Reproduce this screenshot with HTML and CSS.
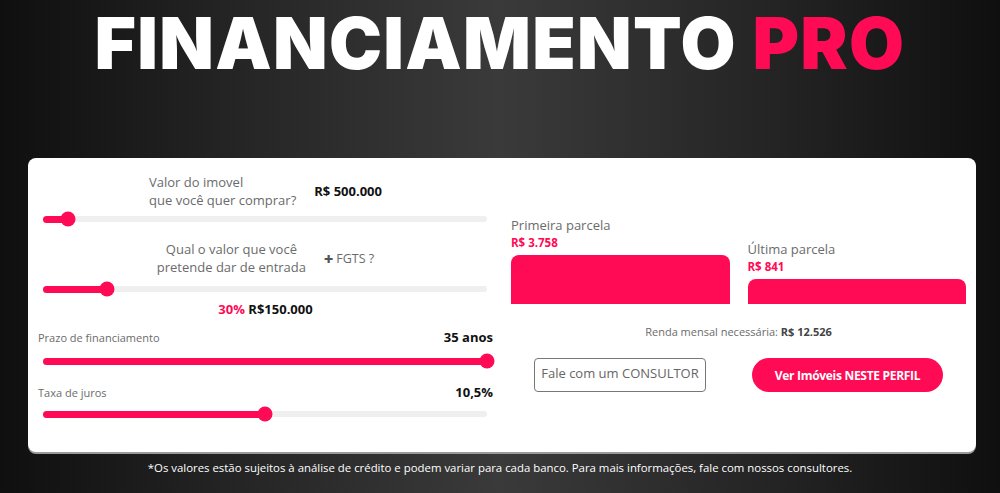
FILE: index.html
```html
<!DOCTYPE html>
<html lang="pt-BR">
<head>
<meta charset="utf-8">
<title>Financiamento PRO</title>
<link rel="stylesheet" href="styles.css">
</head>
<body>
<h1 class="title">FINANCIAMENTO <span class="pink">PRO</span></h1>
<main class="card">
  <section class="left">
    <div class="qrow">
      <div class="qtext left-align">Valor do imovel<br>que você quer comprar?</div>
      <div class="qvalue">R$ 500.000</div>
    </div>
    <div class="slider s1"><div class="fill" style="width:5.6%"></div><div class="thumb" style="left:5.6%"></div></div>

    <div class="qrow q2">
      <div class="qtext">Qual o valor que você<br>pretende dar de entrada</div>
      <div class="fgts"><span class="plus">✚</span> FGTS ?</div>
    </div>
    <div class="slider s2"><div class="fill" style="width:14.4%"></div><div class="thumb" style="left:14.4%"></div></div>

    <div class="entrada"><span class="pink">30%</span> R$150.000</div>

    <div class="lrow"><span class="lbl">Prazo de financiamento</span><span class="val">35 anos</span></div>
    <div class="slider s3"><div class="fill" style="width:100%"></div><div class="thumb" style="left:100%"></div></div>

    <div class="lrow l2"><span class="lbl">Taxa de juros</span><span class="val">10,5%</span></div>
    <div class="slider s4"><div class="fill" style="width:50%"></div><div class="thumb" style="left:50%"></div></div>
  </section>

  <section class="right">
    <div class="bars">
      <div class="barcol">
        <div class="blabel">Primeira parcela</div>
        <div class="bvalue">R$ 3.758</div>
        <div class="bar big"></div>
      </div>
      <div class="barcol">
        <div class="blabel">Última parcela</div>
        <div class="bvalue">R$ 841</div>
        <div class="bar small"></div>
      </div>
    </div>
    <div class="renda">Renda mensal necessária: <b>R$ 12.526</b></div>
    <div class="buttons">
      <a class="btn outline">Fale com um CONSULTOR</a>
      <a class="btn solid">Ver Imóveis NESTE PERFIL</a>
    </div>
  </section>
</main>
<p class="note">*Os valores estão sujeitos à análise de crédito e podem variar para cada banco. Para mais informações, fale com nossos consultores.</p>
</body>
</html>
```

FILE: styles.css
```css
* { box-sizing: border-box; }
html, body { margin: 0; padding: 0; }
body {
  width: 1000px;
  height: 493px;
  overflow: hidden;
  font-family: "Open Sans", "Liberation Sans", sans-serif;
  background: linear-gradient(to right, #0f0f0f 0%, #262626 25%, #3a3a3a 50%, #262626 75%, #0f0f0f 100%);
}
.pink { color: #ff0a54; }

.title {
  margin: 0;
  height: 158px;
  padding-top: 0;
  text-align: center;
  font-family: "Inter", "Liberation Sans", sans-serif;
  font-weight: 900;
  font-size: 71px;
  line-height: 86px;
  letter-spacing: 1.3px;
  color: #fff;
}

.card {
  margin: 0 24px 0 28px;
  height: 294px;
  background: #fff;
  border-radius: 8px;
  box-shadow: 0 2px 0 #9a9a9a;
  display: grid;
  grid-template-columns: 465px 1fr;
  column-gap: 18px;
}

.left { padding: 15px 0 0 10px; }

.qrow {
  display: flex;
  justify-content: center;
  align-items: center;
  gap: 18px;
  height: 36px;
}
.qtext {
  font-size: 13px;
  line-height: 18px;
  color: #6b6b6b;
  text-align: center;
}
.qtext.left-align { text-align: left; }
.qvalue { font-size: 13px; font-weight: 700; color: #111; }
.fgts { font-size: 12.5px; color: #6b6b6b; }
.plus { font-size: 11px; color: #555; }
.q2 { margin-top: 18px; }

.slider {
  position: relative;
  height: 6px;
  margin: 7px 6px 0 5px;
  background: #efefef;
  border-radius: 3px;
}
.fill {
  position: absolute;
  left: 0; top: -0.5px;
  height: 7px;
  background: #ff0a54;
  border-radius: 4px;
}
.thumb {
  position: absolute;
  top: 50%;
  width: 15px; height: 15px;
  border-radius: 50%;
  background: #ff0a54;
  transform: translate(-50%, -50%);
}
.s2 { margin-top: 10px; }

.entrada {
  text-align: center;
  font-size: 13px;
  font-weight: 700;
  color: #111;
  line-height: 18px;
  margin-top: 8px;
}

.lrow {
  display: flex;
  justify-content: space-between;
  align-items: center;
  height: 18px;
  margin-top: 10px;
}
.lbl { font-size: 11px; color: #6b6b6b; }
.val { font-size: 13px; font-weight: 700; color: #111; }
.s3 { margin-top: 12px; }
.l2 { margin-top: 19px; }
.s4 { margin-top: 10px; }

.right { padding: 58px 10px 0 0; }
.bars {
  display: flex;
  align-items: flex-end;
  gap: 18px;
}
.barcol { flex: 1; }
.blabel { font-size: 13px; line-height: 18px; color: #6b6b6b; }
.bvalue { font-size: 11.5px; line-height: 16px; font-weight: 700; color: #ff0a54; margin-top: 1px; }
.bar { background: #ff0a54; border-radius: 8px 8px 0 0; margin-top: 4px; }
.bar.big { height: 49px; }
.bar.small { height: 25px; }

.renda {
  text-align: center;
  font-size: 11px;
  line-height: 16px;
  color: #6b6b6b;
  margin-top: 20px;
}
.renda b { color: #444; }

.buttons {
  display: flex;
  justify-content: center;
  gap: 46px;
  margin-top: 18px;
}
.btn {
  height: 34px;
  display: flex;
  align-items: center;
  justify-content: center;
  font-size: 13px;
  text-decoration: none;
}
.outline {
  width: 172px;
  border: 1px solid #777;
  border-radius: 4px;
  color: #666;
  padding-bottom: 4px;
}
.solid {
  width: 191px;
  background: #ff0a54;
  border-radius: 17px;
  color: #fff;
  font-weight: 700;
  font-size: 12px;
  letter-spacing: -0.3px;
}

.note {
  margin: 8px 0 0;
  text-align: center;
  color: #fff;
  font-size: 11.4px;
  line-height: 16px;
  letter-spacing: 0;
}
```
